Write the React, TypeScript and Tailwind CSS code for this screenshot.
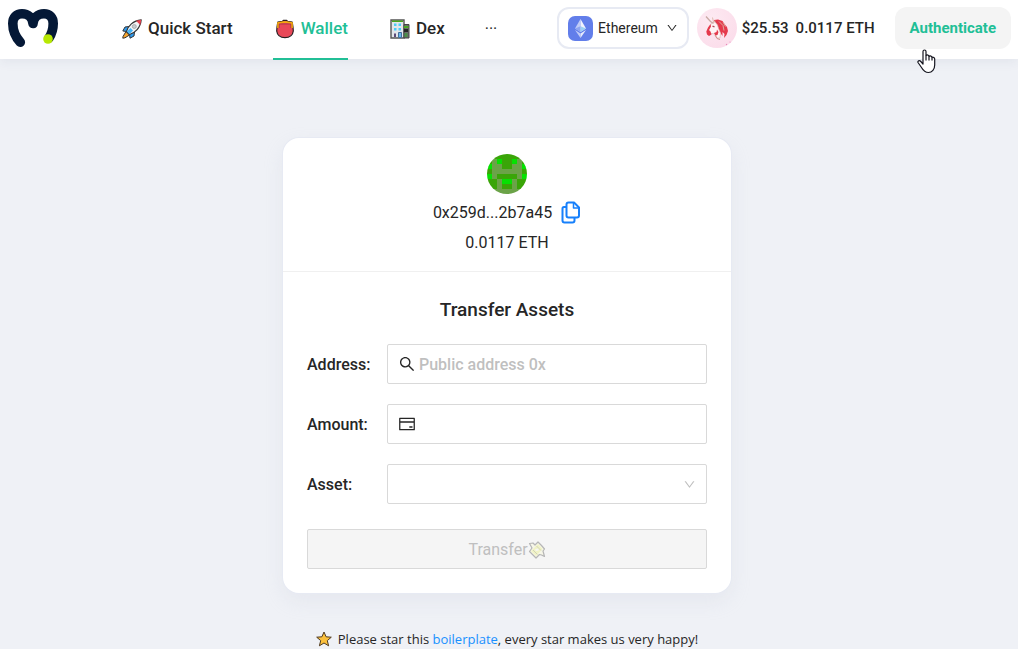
import React, { useState } from "react";
import {
  AiOutlineCreditCard,
  AiOutlineDown,
  AiOutlineSearch,
} from "react-icons/ai";

function MoralisLogo() {
  return (
    <svg width="50" height="38" viewBox="0 0 50 38" aria-label="Moralis" role="img">
      <path
        d="M12.300 33.200C7.500 28 4.800 21 4.800 14.500C4.800 8.500 8.500 4.800 14 4.800C20 4.800 24.500 9 25 14.500C25.500 9 30 4.800 36 4.800C41.500 4.800 45.200 8.500 45.200 14.500C45.200 20 43.500 25 41 29"
        fill="none"
        stroke="#041836"
        strokeWidth="9.600"
        strokeLinecap="round"
        strokeLinejoin="round"
      />
      <circle cx="40" cy="30" r="4.800" fill="#b7e803" />
    </svg>
  );
}

function RocketIcon() {
  return (
    <svg width="20" height="20" viewBox="0 0 20 20" aria-hidden="true">
      <path d="M4 12.500L1 17.500L.8 19.200L3 18.800L7.500 16Z" fill="#f7a42b" stroke="#333" strokeWidth="1" strokeLinejoin="round" />
      <path d="M7 7.500L3 8L.8 12L5 12.500ZM12.500 13L12 17L8 19.200L7.500 15Z" fill="#2e9bf0" stroke="#333" strokeWidth="1" strokeLinejoin="round" />
      <path d="M4.500 12.500C6 7 11 1.500 19.200.8C18.500 9 13 14 7.500 15.500Z" fill="#f1f3f5" stroke="#333" strokeWidth="1.200" strokeLinejoin="round" />
      <path d="M14 1.800L19.200.8L18.300 6Z" fill="#e8404f" />
      <path d="M4.800 12.500L7.500 15.200L11 11.500L8.500 9Z" fill="#45b4f6" />
      <circle cx="12.300" cy="7.500" r="2" fill="#c7cbd0" stroke="#999" strokeWidth=".7" />
    </svg>
  );
}

function PurseIcon() {
  return (
    <svg width="20" height="20" viewBox="0 0 20 20" aria-hidden="true">
      <path d="M2.800 3L7.500 2.300L8.300 1.300H11.700L12.500 2.300L17.200 3L18 8L18.300 12C17.800 16 14.500 18.600 10 18.600S2.200 16 1.700 12L2 8Z" fill="#e94858" stroke="#2b2024" strokeWidth="1.200" strokeLinejoin="round" />
      <path d="M3 9V3.900L8 3.100H12L17 3.900V9" fill="none" stroke="#f5aa0c" strokeWidth="1.700" />
      <path d="M4.200 9V5H15.800V9" fill="none" stroke="#8c3040" strokeWidth=".6" />
    </svg>
  );
}

function BuildingIcon() {
  return (
    <svg width="20" height="20" viewBox="0 0 20 20" aria-hidden="true">
      <path d="M1 1H14V19H1Z" fill="#e2e6ea" stroke="#555" strokeWidth="1.400" />
      <path d="M2 1.500H13V3H2Z" fill="#49a51c" />
      <path d="M14 5.500H19V19H14Z" fill="#6c6c6c" stroke="#444" />
      <path d="M14 7H18.500V9H14Z" fill="#4aa822" />
      <path d="M14 10H18V13H14Z" fill="#262626" />
      <path d="M14.500 14H17.500V18H14.500Z" fill="#4a8f48" />
      <path d="M4 4.500H6.500V7H4ZM8.500 4.500H11V7H8.500ZM4 9H6.500V11.500H4ZM8.500 9H11V11.500H8.500Z" fill="#4ccdf6" />
      <path d="M8.500 13.500H11.500V18.500H8.500Z" fill="#68b9eb" stroke="#416e9c" />
      <path d="M4 14.500H6V18H4Z" fill="#5b4a78" />
    </svg>
  );
}

function EthereumIcon() {
  return (
    <svg width="25" height="25" viewBox="0 0 25 25" aria-hidden="true">
      <rect width="25" height="25" rx="7" fill="#627eea" />
      <path d="M12.500 3L7 12.500L12.500 16Z" fill="#c0cbf7" />
      <path d="M12.500 3L18 12.500L12.500 16Z" fill="#f0f2fd" />
      <path d="M7 12.500L12.500 10.300V16Z" fill="#8ea4f1" />
      <path d="M18 12.500L12.500 10.300V16Z" fill="#9cd0f4" />
      <path d="M7 14L12.500 17.500V22Z" fill="#c0cbf7" />
      <path d="M18 14L12.500 17.500V22Z" fill="#e8ecfc" />
    </svg>
  );
}

function UnicornIcon() {
  return (
    <svg width="40" height="40" viewBox="0 0 40 40" aria-hidden="true">
      <defs>
        <radialGradient id="pink" cx="35%" cy="30%" r="80%">
          <stop offset="0" stopColor="#fdeaf2" />
          <stop offset="1" stopColor="#fbdcea" />
        </radialGradient>
      </defs>
      <circle cx="20" cy="20" r="20" fill="url(#pink)" />
      <path d="M17 12L21 11.500L25.500 13L27.500 16L30 19L31 23L29.500 27L27 30L27.500 26L25.500 24L25.500 28L22 23L19 17Z" fill="#e5394c" />
      <path d="M14.500 15L18 14L20.500 17L21.500 20.500L23.500 25L23 30L20 30L18 26L15 25.500L12 26L11 24L12.500 20Z" fill="#fff4f6" stroke="#d9bcb4" strokeWidth=".7" />
      <path d="M9 8.500L13.500 13.500L16.500 15.500" fill="none" stroke="#c9aaa5" strokeWidth="1.300" />
      <path d="M15.500 9.500L16.500 14L18.500 13M22 13.500L26 17.500L27 22.500M26 14L28.500 18.500" fill="none" stroke="#dab6a8" strokeWidth=".9" />
      <path d="M13.500 16L11 19.500L9.300 23.500L10 26.500L12 28L14.500 26.500L13.500 23.500L12 22L14 18.500Z" fill="#e5394c" />
      <path d="M17 25L19.500 24L20 21.500L21.500 24L20.500 27L18.500 27.500Z" fill="#e5394c" />
      <path d="M18 27L20 30.500L23 31.500" fill="none" stroke="#cf8f88" strokeWidth="1" />
      <path d="M15.500 18.200L17.500 18.800" stroke="#a94855" strokeWidth="1.300" />
      <circle cx="29.500" cy="36.500" r=".7" fill="#e889ba" />
      <circle cx="33" cy="34" r=".6" fill="#e889ba" />
    </svg>
  );
}

const avatarCells = [
  "dddddddd",
  "dmbddbmd",
  "bmmddmmb",
  "dmmmmmmd",
  "bmddddmb",
  "ddmbbmdd",
  "ddmddmdd",
  "mmmmmmmm",
];
const avatarColors: Record<string, string> = {
  d: "#3aa508",
  m: "#6ba348",
  b: "#06e102",
};

function Avatar() {
  return (
    <svg className="rounded-full" width="40" height="40" viewBox="0 0 8 8" shapeRendering="crispEdges" aria-hidden="true">
      {avatarCells.map((row, y) =>
        row.split("").map((cell, x) => (
          <rect key={`${x}-${y}`} x={x} y={y} width="1" height="1" fill={avatarColors[cell]} />
        ))
      )}
    </svg>
  );
}

function CopyIcon() {
  return (
    <svg width="20" height="24" viewBox="0 0 20 24" fill="none" stroke="#1780fb" strokeWidth="2" strokeLinejoin="round" strokeLinecap="round" aria-hidden="true">
      <path d="M7.500 1.500H13L18 6.500V14.500A2 2 0 0 1 16 16.500H7.500A2 2 0 0 1 5.500 14.500V3.500A2 2 0 0 1 7.500 1.500Z" />
      <path d="M12.500 2V7H17.500" strokeWidth="1.500" />
      <path d="M5 6H3A1.500 1.500 0 0 0 1.500 7.500V19.500A2 2 0 0 0 3.500 21.500H11.500A2 2 0 0 0 13.500 19.500V17" />
    </svg>
  );
}

function MoneyIcon() {
  return (
    <svg width="18" height="18" viewBox="0 0 18 18" aria-hidden="true">
      <path d="M1.500 2.500L5 2L7 4L10 1L13.500 4.500L16.500 8L15 10L16.500 15.500L13.500 14L11.500 13.500L8 17L5 14L1.500 10.500L4 7Z" fill="#f6f6e8" stroke="#b6b6b6" strokeWidth="1.200" strokeLinejoin="round" />
      <path d="M3 10L10 3L14.500 8L8 15Z" fill="#f1f3c6" />
      <path d="M8.500 5L13 9.500M5 9L9.500 13.500" stroke="#c8c9b5" strokeWidth=".8" />
      <path d="M7.500 9L10.500 8.500" stroke="#f5f5f5" strokeWidth="2" />
    </svg>
  );
}

function StarIcon() {
  return (
    <svg width="16" height="16" viewBox="0 0 16 16" aria-hidden="true">
      <path d="M8 1L10.100 5.800L15.300 6.200L11.300 9.600L12.600 14.800L8 12L3.400 14.800L4.700 9.600L.7 6.200L5.900 5.800Z" fill="#fbc03c" stroke="#4f3b22" strokeWidth="1" strokeLinejoin="round" />
    </svg>
  );
}

function HandCursor() {
  return (
    <svg width="19" height="25" viewBox="0 0 19 25" aria-hidden="true">
      <path
        d="M6 15V2.500C6 .5 9 .5 9 2.500V6.500C10 5.500 12 6 12 7.500C13 6.500 15 7 15 8.500C16 7.800 17.700 8.500 17.700 10V16C17.700 20.500 15 23.500 11.500 23.500C8 23.500 6.500 22 4.500 18.500L1 13.500C.3 12 2.500 11 3.800 12.500Z"
        fill="#fff"
        stroke="#15151f"
        strokeWidth="1.200"
        strokeLinejoin="round"
      />
      <path d="M9 6.500V11.500M12 7.500V11.500M15 8.500V11.500" stroke="#15151f" strokeWidth="1.200" />
    </svg>
  );
}

const tab = "flex h-[60px] items-center gap-[6px] border-b-2 pb-px pl-[2px] text-[17px] font-medium";
const label = "pt-[2px] font-medium";
const field = "flex h-10 w-full items-center gap-[3px] rounded-[2px] border border-[#d9d9d9] bg-white px-[10px]";
const input = "min-w-0 flex-1 pt-[2px] font-medium outline-none placeholder:text-[#bfbfbf]";

function Header() {
  return (
    <header className="relative z-10 flex h-[59px] items-start justify-between bg-white pl-2 pr-[7px] shadow-[0_4px_10px_rgba(54,74,99,0.06)]">
      <a href="#home" className="mt-[9px]"><MoralisLogo /></a>
      <nav className="ml-[62px] flex flex-1 items-start gap-10">
        <a href="#quickstart" className={`${tab} border-transparent`}><RocketIcon />Quick Start</a>
        <a href="#wallet" className={`${tab} border-[#21bf96] text-[#21bf96]`}><PurseIcon />Wallet</a>
        <a href="#dex" className={`${tab} border-transparent`}><BuildingIcon />Dex</a>
        <button type="button" aria-label="More pages" className="h-[58px] text-base leading-4">···</button>
      </nav>
      <div className="flex h-14 items-center">
        <button type="button" className="flex h-[42px] items-center gap-[5px] rounded-xl border-2 border-[#e7eaf3] px-[9px] text-sm">
          <EthereumIcon />
          <span>Ethereum</span>
          <AiOutlineDown className="ml-[3px]" size={12} />
        </button>
        <div className="ml-2 flex items-center gap-[5px] text-[15px] font-medium">
          <UnicornIcon />
          <span>$25.53</span>
          <span className="ml-[2px]">0.0117 ETH</span>
        </div>
        <div className="relative ml-5">
          <button type="button" className="h-[42px] rounded-xl bg-[#f4f4f4] px-[15px] text-[15px] font-bold text-[#21bf96]">Authenticate</button>
          <div className="pointer-events-none absolute left-[22px] top-[42px]"><HandCursor /></div>
        </div>
      </div>
    </header>
  );
}

function TransferCard() {
  const [asset, setAsset] = useState("");
  return (
    <main className="w-[448px] max-w-full rounded-2xl bg-white text-base shadow-[0_0_0_1px_#e7eaf3,0_8px_20px_rgba(189,197,209,0.2)]">
      <section className="flex flex-col items-center border-b border-[#f0f0f0] pb-4 pt-4">
        <Avatar />
        <div className="mt-[7px] flex items-center gap-[9px]">
          <span>0x259d...2b7a45</span>
          <button type="button" aria-label="Copy address"><CopyIcon /></button>
        </div>
        <p className="mt-[6px] leading-6">0.0117 ETH</p>
      </section>
      <form className="px-6 pb-6 pt-6" onSubmit={(e) => e.preventDefault()}>
        <h1 className="text-center text-[19px] font-medium leading-7">Transfer Assets</h1>
        <div className="mt-5 grid grid-cols-[80px_1fr] items-center gap-y-5">
          <label htmlFor="address" className={label}>Address:</label>
          <div className={field}>
            <AiOutlineSearch size={18} />
            <input id="address" placeholder="Public address 0x" className={input} />
          </div>
          <label htmlFor="amount" className={label}>Amount:</label>
          <div className={field}>
            <AiOutlineCreditCard size={18} />
            <input id="amount" className={input} />
          </div>
          <label htmlFor="asset" className={label}>Asset:</label>
          <div className={field}>
            <select id="asset" value={asset} onChange={(e) => setAsset(e.target.value)} className="min-w-0 flex-1 appearance-none outline-none">
              <option value=""></option>
              <option value="eth">ETH</option>
            </select>
            <AiOutlineDown size={13} color="#bfbfbf" />
          </div>
        </div>
        <button type="submit" disabled className="mt-[25px] flex h-10 w-full items-center justify-center rounded-[2px] border border-[#d9d9d9] bg-[#f5f5f5] pt-px text-[#bfbfbf]">
          Transfer<MoneyIcon />
        </button>
      </form>
    </main>
  );
}

export default function App() {
  return (
    <div className="flex h-screen flex-col overflow-hidden bg-[#eff1f6] font-[Roboto,sans-serif] text-[#262626]">
      <Header />
      <div className="flex flex-col items-center pr-1 pt-[79px]">
        <TransferCard />
        <footer className="mt-9 flex items-center gap-[6px] whitespace-nowrap font-['Open_Sans',sans-serif] text-[13px] leading-5">
          <StarIcon />
          <p>Please star this <a href="#boilerplate" className="text-[#1890ff]">boilerplate</a>, every star makes us very happy!</p>
        </footer>
      </div>
    </div>
  );
}
